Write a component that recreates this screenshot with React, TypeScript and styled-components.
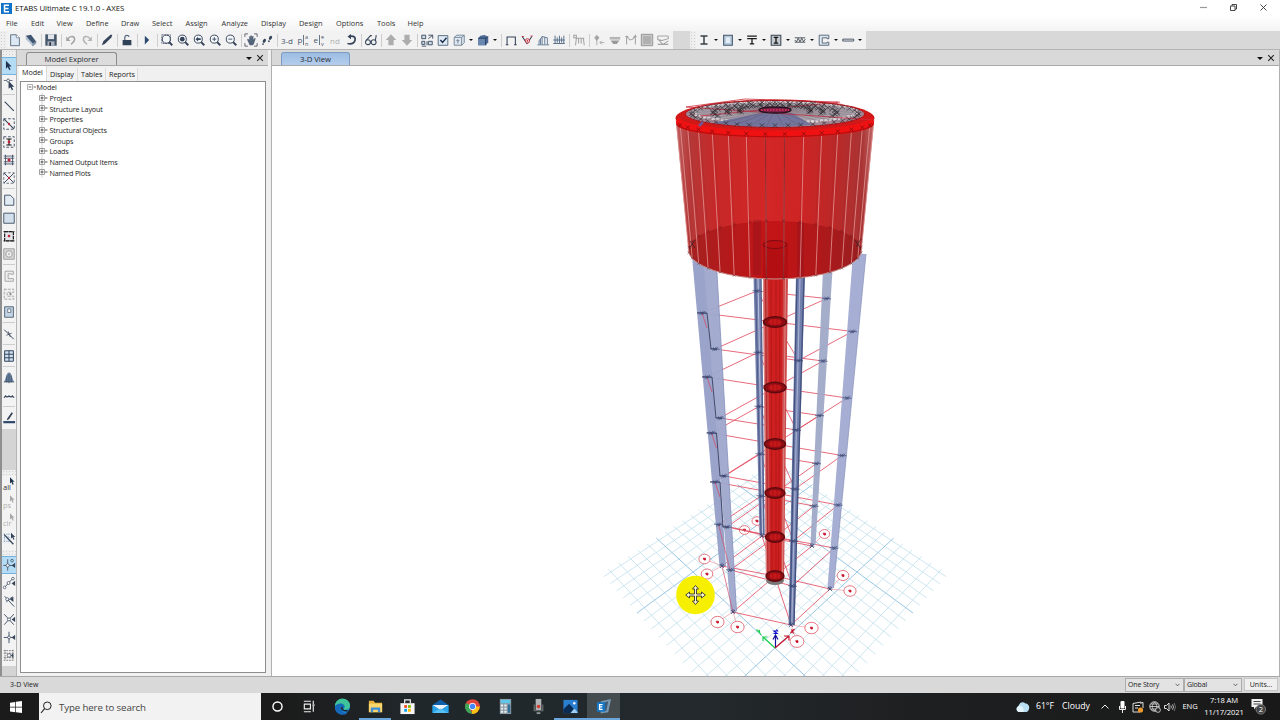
//-----------------------------------------------------------------------------//
// Import
//-----------------------------------------------------------------------------//

import * as React from 'react';
import styled, { createGlobalStyle } from 'styled-components';

//-----------------------------------------------------------------------------//
// Styles
//-----------------------------------------------------------------------------//

const GlobalStyle = createGlobalStyle`
  * { box-sizing: border-box; }
  body {
    margin:      0;
    overflow:    hidden;
    font-family: "Open Sans", "Noto Sans", sans-serif;
    font-size:   7.2px;
    color:       #222;
  }
  svg { display: block; flex: none; }
`;

const Window = styled.div`
  width:          1280px;
  height:         720px;
  display:        flex;
  flex-direction: column;
  background:     #fff;
`;

const TitleBar = styled.div`
  height:      15px;
  flex:        none;
  display:     flex;
  align-items: center;
  padding:     1px 11px 0 1px;
  font-size:   7.8px;
  color:       #111;
`;

const Title = styled.span`
  flex:        1;
  margin-left: 3px;
  letter-spacing: -0.08px;
`;

const WindowButtons = styled.div`
  display: flex;
  gap:     20px;
`;

const MenuBar = styled.div`
  height:      16px;
  flex:        none;
  display:     flex;
  align-items: center;
  padding-left: 6px;
  font-size:   7.4px;
  background:  linear-gradient(#fff, #f4f4f4);
`;

const MenuItem = styled.span<{ $w: number }>`
  width:       ${p => p.$w}px;
  white-space: nowrap;
  color:       #333;
`;

const ToolRow = styled.div`
  height:        19px;
  flex:          none;
  display:       flex;
  background:    #d8d8d8;
  border-bottom: 1px solid #b4b4b4;
`;

const Toolbar = styled.div<{ $gap?: number }>`
  display:      flex;
  align-items:  center;
  background:   #f2f2f2;
  margin-left:  ${p => p.$gap || 0}px;
  padding-right: 2px;
`;

const Grip = styled.div<{ $vertical?: boolean, $size: number }>`
  width:      ${p => p.$vertical ? '14px' : p.$size + 'px'};
  height:     ${p => p.$vertical ? p.$size + 'px' : '18px'};
  background: radial-gradient(#d0d0d0 0.7px, #eee 0.8px) 0 0 / 3px 3px;
  flex:       none;
`;

const ToolSlot = styled.div<{ $active?: boolean, $h?: number }>`
  width:           ${p => p.$h ? 14 : 16}px;
  height:          ${p => p.$h || 18}px;
  display:         flex;
  align-items:     center;
  justify-content: center;
  background:      ${p => p.$active ? '#b5dcf5' : 'transparent'};
  border:          solid ${p => p.$active ? '#74b3de' : 'transparent'};
  border-width:    1px 0;
  flex:            none;
`;

const ToolText = styled.span<{ $dim?: boolean }>`
  font-size:   8px;
  color:       ${p => p.$dim ? '#b0b0b0' : '#46546a'};
  white-space: nowrap;
`;

const Divider = styled.i`
  width:       1px;
  height:      13px;
  margin:      0 1px 0 2px;
  background:  #cdcdcd;
`;

const HDivider = styled.i`
  display:     block;
  width:       12px;
  height:      1px;
  margin:      1px 1px 2px;
  background:  #cdcdcd;
`;

const Caret = styled.i<{ $big?: boolean }>`
  width:        0;
  height:       0;
  margin:       0 2px;
  border:       solid transparent;
  border-width: ${p => p.$big ? '3px 3px 0' : '2.4px 2px 0'};
  border-top-color: #111;
`;

const Workspace = styled.div`
  height:  626px;
  display: flex;
  flex:    none;
  background: #efefef;
`;

const SideStrip = styled.div`
  width:       17px;
  border-left: 2px solid #8f8f8f;
  border-right: 1px solid #b5b5b5;
  background:  #d4d4d4;
`;

const SideGroup = styled.div<{ $gap?: number }>`
  width:         14px;
  margin-top:    ${p => p.$gap || 0}px;
  padding-bottom: 2px;
  background:    #f3f3f3;
`;

const Explorer = styled.div`
  width:          251px;
  display:        flex;
  flex-direction: column;
  background:     #f0f0f0;
`;

const DockHeader = styled.div<{ $pad: number }>`
  height:        16px;
  display:       flex;
  align-items:   flex-end;
  padding-left:  ${p => p.$pad}px;
  background:    #d9d9d9;
  border-bottom: 1px solid #a9a9a9;
`;

const DockTab = styled.div<{ $w: number, $blue?: boolean }>`
  width:         ${p => p.$w}px;
  height:        13px;
  line-height:   12px;
  text-align:    center;
  font-size:     7.8px;
  letter-spacing: -0.1px;
  color:         #2b2f36;
  border:        1px solid ${p => p.$blue ? '#7d9cc4' : '#8c8c8c'};
  border-bottom: 0;
  border-radius: 3px 3px 0 0;
  background:    ${p => p.$blue ? 'linear-gradient(#9dbde2, #b3cdec)' : '#dcdcdc'};
`;

const DockButtons = styled.div`
  display:      flex;
  align-items:  center;
  gap:          2px;
  height:       14px;
  margin-left:  auto;
  padding-right: 4px;
`;

const PageTabs = styled.div`
  height:      15px;
  display:     flex;
  align-items: flex-end;
  padding-left: 2px;
`;

const PageTab = styled.div<{ $w: number, $on?: boolean }>`
  width:        ${p => p.$w}px;
  height:       ${p => p.$on ? 15 : 13}px;
  line-height:  ${p => p.$on ? 13 : 12}px;
  padding-left: 3px;
  background:   ${p => p.$on ? '#fff' : '#f3f3f3'};
  border-right: 1px solid #dcdcdc;
  color:        #222;
  letter-spacing: -0.05px;
`;

const TreeBox = styled.div`
  flex:       1;
  margin:     0 2px 3px 3px;
  border:     1px solid #8e8e8e;
  background: #fff;
`;

const TreeRow = styled.div<{ $level: number }>`
  height:       10.67px;
  display:      flex;
  align-items:  center;
  padding-left: ${p => 6 + p.$level * 12}px;
  color:        #1c1c1c;
  letter-spacing: -0.16px;

  svg { margin-right: ${p => 0.5 + p.$level}px; }
`;

const ViewPane = styled.div`
  flex:           1;
  margin-left:    3px;
  border-left:    1px solid #b0b0b0;
  border-right:   1px solid #b0b0b0;
  display:        flex;
  flex-direction: column;
  background:     #fff;
`;

const StatusBar = styled.div`
  height:       17px;
  flex:         none;
  display:      flex;
  align-items:  center;
  padding:      0 2px 1px 10px;
  background:   #d9d9d9;
  border-top:   1px solid #a8a8a8;
  font-size:    7px;
`;

const StatusText = styled.span`
  flex: 1;
`;

const Combo = styled.div<{ $w: number }>`
  width:           ${p => p.$w}px;
  height:          14px;
  display:         flex;
  align-items:     center;
  justify-content: space-between;
  padding:         0 3px 0 2px;
  border:          1px solid #adadad;
  background:      #e3e3e3;
  letter-spacing:  -0.15px;
`;

const UnitsButton = styled.div`
  width:       34px;
  height:      13px;
  line-height: 11px;
  margin-left: 2px;
  text-align:  center;
  background:  #efefef;
  border:      1px solid #c6c6c6;
`;

const Taskbar = styled.div`
  height:      27px;
  flex:        none;
  display:     flex;
  align-items: stretch;
  background:  linear-gradient(90deg, #1b1b1b 0, #1b1b1b 22%, #20272a 32%, #23292c 55%, #1e1f20 72%, #191919);
  color:       #fff;
`;

const StartButton = styled.div`
  width:           39px;
  display:         flex;
  align-items:     center;
  justify-content: center;
  padding-right:   8px;
`;

const Search = styled.div`
  width:       222px;
  display:     flex;
  align-items: center;
  gap:         7px;
  padding:     1px 0 0 1px;
  background:  #f2f2f2;
  color:       #444;
  font-size:   9.7px;
  letter-spacing: -0.12px;
`;

const Apps = styled.div`
  display: flex;
`;

const Task = styled.div<{ $open?: boolean, $active?: boolean }>`
  width:           32.6px;
  display:         flex;
  align-items:     center;
  justify-content: center;
  background:      ${p => p.$active ? '#454c50' : 'transparent'};
  border-bottom:   2px solid ${p => p.$open ? '#6aa6dc' : 'transparent'};
  border-top:      2px solid ${p => p.$active ? '#454c50' : 'transparent'};
`;

const Tray = styled.div`
  display:     flex;
  align-items: center;
  margin-left: auto;
  padding-right: 8px;
`;

const TrayCell = styled.div<{ $w: number, $small?: boolean }>`
  width:           ${p => p.$w}px;
  display:         flex;
  justify-content: center;
  text-align:      center;
  white-space:     nowrap;
  line-height:     11.500px;
  font-size:       ${p => p.$small ? 7.6 : 8.7}px;
  letter-spacing:  ${p => p.$small ? -0.1 : 0}px;
`;

//-----------------------------------------------------------------------------//
// Icons (all drawn on a 16 x 16 box)
//-----------------------------------------------------------------------------//

const INK  = '#35445a';
const DIM  = '#a4a4a4';
const PALE = '#cfdcea';

const lens = (inner: React.ReactNode) => (
  <>
    <circle cx="7.2" cy="7" r="4.6" fill="#f4f7fa" stroke={INK} strokeWidth="1.1"/>
    <path d="M10.5 10.5L14 14" stroke={INK} strokeWidth="2.2"/>
    {inner}
  </>
);

const pointer = (x: number, y: number, fill: string) => (
  <path d={`M${x} ${y}v9l2-1.900 1.800 3.600 1.600-.8-1.800-3.400h2.900z`} fill={fill}/>
);

const arrowTip = <path d="M15 5.5v6l-4-3z" fill={INK}/>;

const ICONS: { [name: string]: React.ReactNode } = {
  'new':   <><path d="M3 2h6.500l3.500 3.500v9h-10z" fill="#dce9f4" stroke="#53657a"/><path d="M9.500 2v3.500h3.500" fill="#fff" stroke="#53657a" strokeWidth=".7"/></>,
  'book':  <><path d="M2 3l6-1 6 8-4 5z" fill="#3f5571"/><path d="M2 3v4l8 8v-3z" fill="#b8c5d4"/><path d="M10 12l4-3v3l-4 3z" fill="#8698ad"/></>,
  'save':  <><path d="M1.500 1.500h13v13h-13z" fill="#46566a"/><path d="M4.500 1.500h7v5.500h-7z" fill="#dfe5ea"/><path d="M4 9.500h8v5H4z" fill="#aab5c1"/><path d="M6 10.500h2v4H6z" fill="#334"/></>,
  'undo':  <><path d="M4 7c4-5 9-3 8 1-.4 2-2 3-4 5" fill="none" stroke={DIM} strokeWidth="1.8"/><path d="M2.5 4v5h5z" fill={DIM}/></>,
  'redo':  <><path d="M12 7c-4-5-9-3-8 1 .4 2 2 3 4 5" fill="none" stroke="#b4b4b4" strokeWidth="1.8"/><path d="M13.5 4v5h-5z" fill="#b4b4b4"/></>,
  'pen':   <path d="M2 14l2-5 8-7 2 0-1 3-7 7-2 1z" fill={INK}/>,
  'lock':  <><path d="M3 8h10v6H3z" fill="#2f4257"/><path d="M5.5 8V4.5a2.6 2.6 0 0 1 5 0" fill="none" stroke="#55677c" strokeWidth="1.4"/></>,
  'play':  <path d="M5.500 3l5 5-5 5z" fill="#2d4a6f"/>,
  'zrect': lens(<path d="M2 2h10v10H2z" fill="none" stroke={INK} strokeWidth=".8" strokeDasharray="2 1"/>),
  'zfull': lens(<circle cx="7.2" cy="7" r="2.7" fill={INK}/>),
  'zprev': lens(<path d="M10 6v2H7v1.6L4 7l3-2.6V6z" fill={INK}/>),
  'zin':   lens(<path d="M5 7h4.400M7.200 4.800v4.400" stroke={INK}/>),
  'zout':  lens(<path d="M5 7h4.400" stroke={INK}/>),
  'hand':  <><path d="M3.500 7.500l1.300-.8L6 8V3.800h1.500v3V2.800H9v4l.3-3.300h1.500V8l1-2.200 1.500.5-1.800 5.700-1.200 2H6.500z" fill="#54657a"/><path d="M1 4.500V1h3.500M11.500 1H15v3.500M15 11.500V15h-3.500M4.500 15H1v-3.500" fill="none" stroke="#445" strokeWidth=".9"/></>,
  'steps': <><ellipse cx="5" cy="9" rx="1.600" ry="2.500" fill={INK} transform="rotate(30 5 9)"/><ellipse cx="3.400" cy="12.700" rx="1" ry="1.100" fill={INK}/><ellipse cx="12" cy="5.500" rx="1.600" ry="2.500" fill={INK} transform="rotate(30 12 5.5)"/><ellipse cx="10.200" cy="9.500" rx="1" ry="1.100" fill={INK}/></>,
  'rot':   <><path d="M7 3.500c5-.5 6.500 2 5.500 5s-4 4.500-8.500 3.500" fill="none" stroke={INK} strokeWidth="2"/><path d="M8 1v6L4 4z" fill={INK}/></>,
  'specs': <g fill="none" stroke={INK} strokeWidth="1.200"><circle cx="4.500" cy="10.500" r="2.800"/><circle cx="11" cy="10.500" r="2.800"/><path d="M2.500 8.500l5-5.500 1.500 0M13 8.500l1-6M7 10h1.500"/></g>,
  'up':    <path d="M8 1.500l6 6.500H11v6H5V8H2z" fill="#adadad"/>,
  'down':  <path d="M8 14.500l6-6.500H11V2H5v6H2z" fill="#adadad"/>,
  'objs':  <><path d="M2 2.500h4.500v4H2zM9.500 9.500h4.500v4H9.500zM2 9.500h3.500v3.500H2z" fill={PALE} stroke={INK}/><path d="M9.500 2.500h5v4M9.500 6.500l5-4M8 14v-4.500M2 15h5" fill="none" stroke={INK} strokeWidth="1"/></>,
  'check': <><path d="M2.500 3h11v11h-11z" fill="#dfeaf5" stroke="#4c6078"/><path d="M5 8l2.500 2.700L12 5.500" fill="none" stroke="#1f3250" strokeWidth="1.700"/></>,
  'cube':  <><path d="M2.500 5l3-2.500h8.500V11l-3 3h-8.500z" fill="#dfe7ef" stroke="#6c7f94"/><path d="M2.500 5h8.500v9M11 5l3-2.500M6.700 7v5M5 8.700h3.400" fill="none" stroke="#6c7f94"/></>,
  'solid': <><path d="M2.500 6l2.500-3 5-.8 4 2.300v6L11 14h-8.500z" fill="#4c6a94"/><path d="M2.500 6h8v8h-8z" fill="#6a87b0"/><path d="M2.500 6h8.500v8M11 6l3-2" fill="none" stroke="#23395a"/></>,
  'frame': <path d="M3.500 13.500V4.500h9.500v9M2 13.500h3M11.500 13.500h3" fill="none" stroke={INK} strokeWidth="1.200"/>,
  'disp':  <><path d="M2.500 4l5.500 8 5.500-8" fill="none" stroke={INK} strokeWidth="1.200"/><circle cx="8.500" cy="9" r="2.500" fill="#f3dede" stroke="#c2283a"/><circle cx="8.500" cy="9" r=".9" fill="#c2283a"/><path d="M2 4h2.500M12 3.500h2.500" stroke="#c2283a"/></>,
  'shear': <path d="M1.500 13.500h13.500M3.500 13V9l3.500-5v9M7 4l6 1.500V13M10 4.800V13M5.200 7v6" fill="none" stroke="#55708f"/>,
  'loads': <path d="M1.500 8h13M3.500 3v9M6 5v6M8.500 3v9M11 5v6M13.500 3v9M1.500 12h13" fill="none" stroke="#496380" strokeWidth="1"/>,
  'table': <path d="M4 14l1-8h8l1 8M7.500 6v6M10.500 6v6M2 2.500h3v3H2zM4 6h10" fill="none" stroke={DIM} strokeWidth="1.200"/>,
  'tree':  <><path d="M5.500 2l3 3.500-3 3.500-3-3.500z" fill={DIM}/><path d="M5.500 8v6M9 11h5M11 9l-2 2 2 2" fill="none" stroke={DIM}/></>,
  'slab':  <><path d="M2 4.500h12v3H2z" fill="#b5b5b5"/><path d="M3 8.500h10l-3 4H6z" fill="#999"/></>,
  'mom':   <path d="M3 13V4l4 4 3-1 3-4v10M1.500 4h3.500M11 4h3.500" fill="none" stroke={DIM} strokeWidth="1.200"/>,
  'shell': <><path d="M1.500 1.500h13v13h-13z" fill="#c9c9c9" stroke="#8e8e8e"/><path d="M3.500 3.500h9v9h-9z" fill="#b0b0b0"/></>,
  'arch':  <path d="M2 3.500h12M2 3.500v4l5 1 7-2v-3M3 8l5 5 6-4M2 13h12" fill="none" stroke={DIM} strokeWidth="1.200"/>,
  'ibeam': <path d="M4 3.500h8M4 12.500h8M8 3.500v9" stroke="#3a4048" strokeWidth="1.700"/>,
  'box':   <><path d="M3 2.500h10v11.500H3z" fill="#b4c8da" stroke="#46586c" strokeWidth="1.200"/><path d="M5.500 5h5v6.500h-5z" fill="#e5eef6"/></>,
  'tee':   <path d="M2.500 3.500h11M2.500 6.500h11M8 6v6.500M5.500 12.500h5" stroke="#1c1c1c" strokeWidth="1.500"/>,
  'iboxed':<><path d="M2.500 2.500h11v11.500h-11z" fill="#c3cad1" stroke="#3b444e" strokeWidth="1.200"/><path d="M5.500 5h5M5.500 11.500h5M8 5v6.500" stroke="#111" strokeWidth="1.500"/></>,
  'truss': <path d="M2 5.500h12M2 10.500h12M2 8l2 2 2-4 2 4 2-4 2 4 2-3" fill="none" stroke="#3c444c" strokeWidth="1"/>,
  'chan':  <><path d="M2.500 2.500h11v4h-2V5.500H6v6h5.500v-1h2v3.500h-11z" fill="#dde7f0" stroke="#4d5d6f" strokeWidth="1"/></>,
  'link':  <path d="M2 7h12.500v2.200H2z" fill="#e8edf2" stroke="#3c4a59"/>,

  'ptr':   pointer(4.500, 2, '#1f3350'),
  'node':  <>{pointer(7.500, 4.500, '#33425a')}<path d="M2 4h10M7 2v4" stroke={INK} strokeWidth=".8"/><circle cx="7" cy="4" r="1.600" fill="#fff" stroke={INK} strokeWidth=".8"/></>,
  'line':  <path d="M3 3l10.500 10.500" stroke={INK} strokeWidth="1.200"/>,
  'dline': <><path d="M2 2h12v12H2z" fill="none" stroke={INK} strokeDasharray="3 2"/><path d="M2.500 2.500l11 11" stroke={INK} strokeWidth="1.200"/><circle cx="8" cy="8" r="1.300" fill="#c4203a"/></>,
  'dcol':  <><path d="M2 2h12v12H2z" fill="none" stroke={INK} strokeDasharray="3 2"/><path d="M5 4.500h6M5 11.500h6M8 4.500v7" stroke="#111" strokeWidth="1.200"/><circle cx="8" cy="8" r="1.600" fill="#c4203a"/></>,
  'dbeam': <><path d="M2 3.500h12M2 12.500h12M2 6h12M2 10h12M4 2v12M12 2v12" stroke={INK} strokeWidth=".9"/><circle cx="8" cy="8" r="1.800" fill="#c4203a"/></>,
  'dbrace':<><path d="M2 2h12v12H2z" fill="none" stroke={INK} strokeWidth=".8" strokeDasharray="3 2"/><path d="M2.500 2.500l11 11M13.500 2.500l-11 11" stroke={INK} strokeWidth="1.100"/><circle cx="8" cy="8" r="1.300" fill="#c4203a"/></>,
  'poly':  <path d="M3 2.500h6.500L13.500 6.500v7.500H3z" fill="#e2ebf3" stroke="#47586c" strokeWidth="1.100"/>,
  'rect':  <path d="M2 2.500h12v11.500H2z" fill="#d3e0ec" stroke="#47586c" strokeWidth="1.100"/>,
  'rectp': <><path d="M3 3h10v10.500H3z" fill="#e3e6ea" stroke="#222" strokeWidth="1.400" strokeDasharray="4 1"/><path d="M1.500 3h13M1.500 13.500h13" stroke="#222" strokeWidth=".8"/><circle cx="8" cy="8" r="1.500" fill="#c4203a"/></>,
  'circ':  <><path d="M2 2h12v12H2z" fill="#d6d6d6" stroke="#999"/><circle cx="8" cy="8" r="3.700" fill="#eee" stroke="#999"/><circle cx="8" cy="8" r=".9" fill="#888"/></>,
  'wall':  <path d="M3.500 2.500h9.500v3.500h-2.500V5.500H7v5.500h6v3H3.500z" fill="#eee" stroke={DIM} strokeWidth="1.100"/>,
  'wallp': <><path d="M2.500 2.500h11v3.500H6v4.500h7.500v3.500h-11z" fill="#eee" stroke={DIM} strokeWidth="1.100" strokeDasharray="3 1.500"/><path d="M8 8h3.500M9.700 6.500v3" stroke="#888"/></>,
  'open':  <><path d="M3 2h10v12H3z" fill="#c3d4e4" stroke="#47586c"/><path d="M6.500 4.500h3.500v4H6.500z" fill="#fff" stroke="#47586c" strokeWidth=".8"/></>,
  'linkd': <><path d="M2.500 3l11 11" stroke={INK} strokeWidth="1.100"/><path d="M5 9.500l6-2.500M7 5l2.500 6.500" stroke={INK} strokeWidth=".9"/></>,
  'grid':  <path d="M3 2h10v12H3zM3 6h10M3 10h10M8 2v12" fill="#cfe0ef" stroke="#2f4257" strokeWidth="1.100"/>,
  'tower': <><path d="M6 2.500h4l3.500 10h-11z" fill="#6d87a5"/><path d="M8 1.500V14M5.500 5v8M10.500 5v8M2 12.500h12" stroke="#2f4257" strokeWidth=".8"/></>,
  'wave':  <path d="M2 9.500q1.500 0 2-1.500 2 2 4 0 2 2 4 0 .5 1.500 2 1.500" fill="none" stroke={INK} strokeWidth="1.300"/>,
  'sect':  <><path d="M6 8.500l5-7 1.500 1L8 9.500l-2.500 1z" fill={INK}/><path d="M1.500 11.500h13.500v2.500H1.500z" fill="#2d476a"/></>,
  'dash':  <><path d="M2 2.500h9M2 6.500h9M2 10.500h9M3 2v11M7 2v11" stroke="#86a8c8" strokeDasharray="1.500 1.200"/><path d="M2.500 3L13 14" stroke={INK} strokeWidth="1.500"/><g transform="translate(6.500 0) scale(.75)">{pointer(5, 1, '#33425a')}</g></>,
  's1':    <><path d="M6.500 1.500v13M1.500 8.500h12" stroke={INK} strokeWidth=".9"/><circle cx="6.500" cy="8.500" r="1.800" fill="#fff" stroke={INK} strokeWidth=".8"/><circle cx="11.500" cy="3" r="1.500" fill="none" stroke={INK} strokeWidth=".8"/>{arrowTip}</>,
  's2':    <><path d="M3 13L12 3" stroke={INK} strokeWidth=".9"/><circle cx="3" cy="13" r="1.500" fill="#fff" stroke={INK} strokeWidth=".8"/><circle cx="7.500" cy="8" r="1.700" fill="#fff" stroke={INK} strokeWidth=".8"/><circle cx="12.500" cy="3" r="1.500" fill="#fff" stroke={INK} strokeWidth=".8"/>{arrowTip}</>,
  's3':    <><path d="M3 2.500l11 12M5 9l7-6" stroke={INK} strokeWidth="1"/><circle cx="6" cy="6" r="1.700" fill="#fff" stroke={INK} strokeWidth=".8"/><path d="M13 3v6L9 6z" fill={INK}/></>,
  's4':    <><path d="M2.500 2.500l11 12M13.500 2.500l-11 12" stroke={INK} strokeWidth="1"/><circle cx="8" cy="8.500" r="1.700" fill="#fff" stroke={INK} strokeWidth=".8"/>{arrowTip}</>,
  's5':    <><path d="M8 2v13M2 8.500h10" stroke={INK} strokeWidth="1"/><circle cx="8" cy="8.500" r="1.600" fill="#fff" stroke={INK} strokeWidth=".8"/>{arrowTip}</>,
  's6':    <><path d="M2 3h12M2 6h12M2 11h12M2 14h12M3.500 2v12M12.500 2v12" stroke="#777" strokeDasharray="2 1"/><circle cx="8" cy="8.500" r="2" fill="#fff" stroke={INK} strokeWidth=".8"/><path d="M13 6v5l-3-2.500z" fill={INK}/></>,
};

type IconProps = { name: string, size?: number }

const Icon = ({ name, size = 14 }: IconProps) => (
  <svg width={size} height={size} viewBox="0 0 16 16">{ICONS[name]}</svg>
);

const Cross = ({ size }: { size: number }) => (
  <svg width={size} height={size} viewBox="0 0 8 8"><path d="M1.200 1.200l5.600 5.600M6.800 1.200L1.200 6.800" stroke="#222" strokeWidth="1.100"/></svg>
);

const Chevron = () => (
  <svg width="5" height="4" viewBox="0 0 5 4"><path d="M.5 .8l2 2 2-2" fill="none" stroke="#444" strokeWidth=".8"/></svg>
);

//-----------------------------------------------------------------------------//
// Data. '|' is a separator, 'v' a drop down arrow, '#' and '~' stand for text
//-----------------------------------------------------------------------------//

const MENU: [string, number][] = [
  ['File', 25], ['Edit', 25.500], ['View', 29.500], ['Define', 35], ['Draw', 31], ['Select', 33.5],
  ['Assign', 36], ['Analyze', 39.500], ['Display', 38], ['Design', 37], ['Options', 41],
  ['Tools', 30.500], ['Help', 30],
];

const TOOLS_MAIN = ('new book | save | undo redo | pen | lock | play | zrect zfull zprev zin zout | '
  + 'hand steps | #3-d #pla #ele ~nd rot | specs | up down | objs check cube v solid v | '
  + 'frame disp shear loads | table | tree slab mom shell arch').split(' ');

const TOOLS_SECTION = 'ibeam v box v tee v iboxed v truss v chan v link v'.split(' ');

const SIDE_DRAW   = ('*ptr node | line dline dcol dbeam dbrace | poly rect rectp circ | wall wallp open | '
  + 'linkd | grid | tower wave | sect').split(' ');
const SIDE_SELECT = '#all ~ps ~clr dash'.split(' ');
const SIDE_SNAP   = '*s1 s2 s3 s4 s5 s6'.split(' ');

const TREE = ['Project', 'Structure Layout', 'Properties', 'Structural Objects', 'Groups', 'Loads',
  'Named Output Items', 'Named Plots'];

//-----------------------------------------------------------------------------//
// Tool bars
//-----------------------------------------------------------------------------//

const SplitText = ({ head, top, bottom }: { head: string, top: string, bottom: string }) => (
  <svg width="15" height="16" viewBox="0 0 15 16" fill="#46546a">
    <text x="1.500" y="10.500" fontSize="8">{head}</text>
    <path d="M7.500 3v10" stroke="#46546a" strokeWidth=".8"/>
    <text x="9" y="6.500" fontSize="5.500">{top}</text>
    <text x="9" y="14" fontSize="5.500">{bottom}</text>
  </svg>
);

const renderTool = (t: string, i: number) => {
  if (t === '|') return <Divider key={i}/>;
  if (t === 'v') return <Caret key={i}/>;
  if (t === '#pla') return <ToolSlot key={i}><SplitText head="p" top="a" bottom="n"/></ToolSlot>;
  if (t === '#ele') return <ToolSlot key={i}><SplitText head="e" top="e" bottom="v"/></ToolSlot>;
  if (t[0] === '#' || t[0] === '~')
    return <ToolSlot key={i}><ToolText $dim={t[0] === '~'}>{t.slice(1)}</ToolText></ToolSlot>;
  return <ToolSlot key={i}><Icon name={t}/></ToolSlot>;
};

const renderSideTool = (t: string, i: number) => {
  if (t === '|') return <HDivider key={i}/>;
  if (t[0] === '#' || t[0] === '~') {
    const dim = t[0] === '~';
    return (
      <ToolSlot key={i} $h={18}>
        <svg width="14" height="16" viewBox="0 0 14 16">
          <text x="1" y="13" fontSize="7.500" fill={dim ? '#b0b0b0' : '#333'}>{t.slice(1)}</text>
          <g transform="translate(4.500 -.5) scale(.7)">{pointer(5, 1, dim ? '#a8a8a8' : '#1f3350')}</g>
        </svg>
      </ToolSlot>
    );
  }
  const active = t[0] === '*';
  return (
    <ToolSlot key={i} $h={18} $active={active}><Icon name={active ? t.slice(1) : t}/></ToolSlot>
  );
};

//-----------------------------------------------------------------------------//
// 3-D model
//-----------------------------------------------------------------------------//

type Pt = [number, number];

const CX = 775;

// floor plan (u, v) to screen
const floor = (u: number, v: number): Pt => {
  const d = 1 + 0.01335 * (u + v);
  return [CX + 9.295 * (u - v) / d, 648 - 8.615 * (u + v) / d];
};

const seg = (a: Pt, b: Pt) => `M${a[0].toFixed(1)} ${a[1].toFixed(1)}L${b[0].toFixed(1)} ${b[1].toFixed(1)}`;

const FloorGrid = () => {
  const minor: string[] = [];
  const major: string[] = [];
  for (let i = -5; i <= 15; i++) {
    const list = i % 10 === 0 ? major : minor;
    list.push(seg(floor(i, -5.700), floor(i, 15.400)));
    list.push(seg(floor(-5.700, i), floor(15.400, i)));
  }
  return (
    <g fill="none">
      <path d={minor.join('')} stroke="#c0dfec" strokeWidth=".8"/>
      <path d={major.join('')} stroke="#98c6e4" strokeWidth="1"/>
    </g>
  );
};

// node positions down each column, the last one is the support
const COL: { [id: string]: Pt[] } = {
  A: [[702, 313], [707, 377], [711.500, 433], [715, 482], [718.500, 524.500], [722, 566]],
  B: [[715, 349], [720, 418], [724, 476], [727, 527], [730.500, 570], [733, 612]],
  C: [[757, 291], [758, 352.500], [759, 406.500], [760, 454], [761, 496], [762, 536]],
  D: [[798.500, 360.500], [796.500, 430], [795, 489], [793.500, 541], [792.500, 586], [791, 625]],
  E: [[826.500, 298.500], [823, 361], [819.500, 415.500], [816.500, 463.500], [814, 506], [812, 546]],
  F: [[852.500, 331.500], [847, 398], [842, 455.500], [838, 505], [834, 548], [830, 589]],
};

const RING_Y = [322, 387.500, 444, 493, 537, 576];

const Beams = () => {
  const lines: string[] = [];
  RING_Y.forEach((y, i) => {
    const c: Pt = [CX, y];
    'ABCDEF'.split('').forEach(id => lines.push(seg(COL[id][i], c)));
    ['AC', 'CE', 'BD', 'DF'].forEach(e => lines.push(seg(COL[e[0]][i], COL[e[1]][i])));
  });
  return <path d={lines.join('')} stroke="#e2455a" strokeWidth=".8" fill="none"/>;
};

const Supports = () => (
  <g stroke="#36426e" strokeWidth=".8" fill="none" opacity=".9">
    {Object.keys(COL).map(id => COL[id].map(([x, y], i) => (
      <path key={id + i} d={i === 5
        ? `M${x - 2} ${y - 2}l4 4m0 -4l-4 4M${x - 2.500} ${y}h5M${x} ${y - 3}v4`
        : `M${x - 4.500} ${y - .3}l9 .6M${x - 2.500} ${y + 1.800}l4 -3.600M${x - .5} ${y + 1.800}l3.500 -3.600M${x - 2} ${y - 1.500}l3.500 3`}/>
    )))}
  </g>
);

const BUBBLES: Pt[] = [[757, 521], [744.500, 530], [704.500, 559], [707, 574], [717.500, 622], [737.500, 627],
  [811.500, 628], [797, 641.500], [850, 591], [843, 575.500], [824.500, 534]];

const LEADERS = 'M757 521L762 536M744.500 530L762 536M704.500 559L722 566M707 574L722 566'
  + 'M717.500 622L733 612L737.500 627M811.500 628L791 625L797 641M850 591L830 589L843 575M824 534L812 546';

const Bubbles = () => (
  <g>
    <path d={LEADERS} stroke="#ee9aa3" strokeWidth=".7" fill="none"/>
    {BUBBLES.map(([x, y], i) => {
      const r = 5 + (y - 520) / 65;
      return (
        <g key={i}>
          <ellipse cx={x} cy={y} rx={r} ry={r * .86} fill="#fff" stroke="#e46a76" strokeWidth=".9"/>
          <path d={`M${x - 1.300} ${y - .8}h2.300v1.800h-1.500z`} fill="#c8102a" stroke="#c8102a" strokeWidth=".8"/>
        </g>
      );
    })}
  </g>
);

const Columns = () => (
  <g>
    <path d="M753.500 276H761.500L764.500 535H759.500z" fill="#6d7aa8"/>
    <path d="M755.500 276L761 535M761 276L764 535" stroke="#3c4a7c" strokeWidth=".8" fill="none"/>
    <path d="M758 276L762.600 535" stroke="#b9c2de" strokeWidth="1"/>
    <path d="M823 270H832.500L815.500 545H810.500z" fill="#a0a9c8"/>
    <path d="M692 256H706L726 566H719.500z" fill="#959fc8"/>
    <path d="M703 256H716L736.500 611H730.500z" fill="#9fa8cc"/>
    <path d="M716 256L736.500 611" stroke="#7f8abb" strokeWidth=".8"/>
    <path d="M853 254H866L833.500 588H827.500z" fill="#a2abd1"/>
    <path d="M866 254L833.500 588" stroke="#808bb8" strokeWidth=".7"/>
    {COL.A.slice(0, 4).map(([x, y], i) => {
      const [bx, by] = COL.B[i];
      return (
        <g key={i} fill="none">
          <path d={`M${x - 5} ${y}H${x + 5}L${bx - 4} ${by}H${bx + 2}`} stroke="#3b4262" strokeWidth="1"/>
          <path d={`M${x} ${y}L${x + 5} ${y + 15}`} stroke="#cf4560" strokeWidth=".8"/>
        </g>
      );
    })}
    <path d="M718.500 524L730 570M722 566L733 612" stroke="#cf4560" strokeWidth=".7"/>
  </g>
);

const Shaft = () => (
  <g>
    <ellipse cx={CX} cy="580.500" rx="9" ry="4.500" fill="#777"/>
    <path d="M763 276H788L784 579Q775 585 766 579z" fill="#cd4a4a"/>
    <path d="M768 276H783L781 580H770z" fill="#cf2020"/>
    <path d="M765.500 276L768 580M771 276L772 580M776 276V580M780 276L778.500 580" stroke="#a31318" strokeWidth=".6"/>
    <path d="M785.500 276L782.500 580M763.500 276L766.500 580" stroke="#df8a8a" strokeWidth="1"/>
    {RING_Y.map((y, i) => {
      const r = 11.500 - i * .5;
      return (
        <g key={y}>
          <ellipse cx={CX} cy={y} rx={r} ry={5.200} fill="#8d0d12" stroke="#5e0a10" strokeWidth="1.400"/>
          <ellipse cx={CX} cy={y} rx={r * .62} ry={3} fill="#b81418"/>
          <path d={`M${CX - 4} ${y - 3}v6M${CX} ${y - 3}v6M${CX + 4} ${y - 3}v6`} stroke="#d82020" strokeWidth=".7"/>
        </g>
      );
    })}
  </g>
);

const FrontColumn = () => (
  <g>
    <path d="M796 276H805L794.500 625H788.500z" fill="#7380ad"/>
    <path d="M797 276L790 625M804 276L794 625" stroke="#44527f" strokeWidth="1.300" fill="none"/>
    <path d="M800 276L791.800 625" stroke="#a4aed1" strokeWidth="1.200"/>
  </g>
);

const PANELS = 32;

const Tank = () => {
  const angle = (i: number) => (i + .5) * 2 * Math.PI / PANELS;
  const top    = (a: number): Pt => [CX + 99 * Math.cos(a), 122 + 13 * Math.sin(a)];
  const bottom = (a: number): Pt => [CX + 86.500 * Math.cos(a), 250 + 29 * Math.sin(a)];
  const all = Array.from({ length: PANELS }, (_, i) => angle(i));
  const front = all.filter(a => a < Math.PI);
  const back  = all.filter(a => a > Math.PI);

  // crossed mesh on the roof
  const mesh: string[] = [];
  [[.97, 2.500], [.72, 3], [.56, 2.600], [.42, 2.200]].forEach(([f, s], ring) => {
    for (let i = 0; i < 40; i++) {
      const a = (i + ring * .5) * Math.PI / 20;
      if (ring > 0 && Math.sin(a) > .4) continue;
      const x = CX + 86 * f * Math.cos(a);
      const y = 114 + 12 * f * Math.sin(a) - (1 - f) * 6;
      mesh.push(`M${(x - s).toFixed(1)} ${(y - s * .8).toFixed(1)}l${2 * s} ${1.600 * s}m0 ${-1.600 * s}l${-2 * s} ${1.600 * s}`);
    }
  });

  return (
    <g>
      <defs>
        <linearGradient id="shell" x1="0" x2="1">
          <stop offset="0" stopColor="#c06060"/>
          <stop offset=".07" stopColor="#b53838"/>
          <stop offset=".2" stopColor="#c62828"/>
          <stop offset=".45" stopColor="#d32626"/>
          <stop offset=".62" stopColor="#ce2424"/>
          <stop offset=".8" stopColor="#bb2828"/>
          <stop offset=".94" stopColor="#aa3434"/>
          <stop offset="1" stopColor="#c26a6a"/>
        </linearGradient>
        <linearGradient id="tankfloor" x1="0" x2="1">
          <stop offset="0" stopColor="#a01c1c"/>
          <stop offset=".5" stopColor="#c01012"/>
          <stop offset="1" stopColor="#941a1c"/>
        </linearGradient>
      </defs>
      <path d="M676 122L688.500 250A86.500 29 0 0 0 861.500 250L874 122A99 14 0 0 0 676 122z" fill="url(#shell)"/>
      <ellipse cx={CX} cy="250" rx="86.500" ry="29" fill="url(#tankfloor)" opacity=".8"/>
      <path d="M753 220h8v55h-8zM797 222h7v54h-7z" fill="#7d1020" opacity=".3"/>
      <path d="M763 245H788V279H763z" fill="#a80c10" opacity=".6"/>
      <ellipse cx={CX} cy="244.500" rx="12" ry="4" fill="#b80f12" stroke="#7c0b10" strokeWidth="1"/>
      <path d={back.map(a => seg(top(a), bottom(a))).join('')} stroke="#8e1a1e" strokeWidth=".5" opacity=".3"/>
      <path d={front.map(a => seg(top(a), bottom(a))).join('')} stroke="#e59a98" strokeWidth=".9" opacity=".85"/>
      <path d={[7, 8].map(i => seg(top(angle(i)), bottom(angle(i)))).join('')} stroke="#7a1216" strokeWidth=".8"/>
      <path d="M688.500 250A86.500 29 0 0 0 861.500 250" fill="none" stroke="#c98f8f" strokeWidth="1"/>
      <path d={all.map(a => {
        const [x, y] = bottom(a);
        return `M${x - 1.500} ${y - 1.500}l3 2.500m0 -2.500l-3 2.500`;
      }).join('')} stroke="#5c1015" strokeWidth=".6" fill="none" opacity=".6"/>
      <path d="M690 241l5 7m0 -8l-6 9M861 239l-5 8m-1 -7l6 9" stroke="#3a2226" strokeWidth=".7"/>

      <ellipse cx={CX} cy="118" rx="99.500" ry="18.500" fill="#d01818"/>
      <path d="M675.500 119A99.500 17.500 0 0 0 874.500 119L873.500 124.500A98.500 13 0 0 1 676.500 124.500z" fill="#ee1010"/>
      <path d="M676 121A99 15.500 0 0 0 874 121L871 117A96 13.500 0 0 1 679 117z" fill="#f01212"/>
      <path d="M676.500 123.500A98.500 13.200 0 0 0 873.500 123.500" fill="none" stroke="#a80d10" strokeWidth=".9"/>
      <ellipse cx={CX} cy="114" rx="89.500" ry="13.500" fill="#a58a97"/>
      <ellipse cx={CX} cy="112" rx="82" ry="10.500" fill="#a9a1aa" stroke="#ddd6d8" strokeWidth="2.500" strokeDasharray="3 1.500"/>
      <path d="M712 123L760 113L792 113L812 125Q760 130 712 123z" fill="#74759c"/>
      <path d="M686 107L745 99L838 102M686 107L874 120M840 102L700 116" fill="none" stroke="#d22b3c" strokeWidth=".8"/>
      <ellipse cx={CX} cy="114" rx="89.500" ry="13.500" fill="none" stroke="#b01218" strokeWidth="1"/>
      <path d={all.map(a => seg([CX + 88 * Math.cos(a), 114 + 13 * Math.sin(a)], [CX + 16 * Math.cos(a), 110 + 3 * Math.sin(a)])).join('')}
        stroke="#50394a" strokeWidth=".4" opacity=".6"/>
      <path d={mesh.join('')} stroke="#252025" strokeWidth=".65" fill="none" opacity=".85"/>
      <ellipse cx={CX} cy="110" rx="16" ry="3" fill="#7d1e4a" stroke="#26131f" strokeWidth="1.300"/>
      <path d="M761 110h28" stroke="#c83050" strokeWidth="2" strokeDasharray="1.500 1.500"/>
      <path d={front.slice(1, -1).map(a => {
        const [x, y] = top(a);
        return `M${x - 2} ${y - 2.500}l4 3.500m0 -3.500l-4 3.500`;
      }).join('')} stroke="#5a0a0e" strokeWidth=".7" fill="none" opacity=".75"/>
      <path d="M699 126l4 -4" stroke="#6a5a98" strokeWidth="2.500"/>
    </g>
  );
};

const Axes = () => (
  <g fill="none" strokeWidth="1.200">
    <path d="M775.500 648V635M773 639.500l2.500 -4.500 2.500 4.500" stroke="#10109c"/>
    <path d="M773.500 633.500h3.500l-3 -2.500h3.500l-1 -1.500" stroke="#1010c8"/>
    <path d="M775 648L763 637M763 641v-4h4.500" stroke="#1fd050"/>
    <path d="M756.500 629.500l3 3 0 -2.500m0 2.500l1.500 2.500" stroke="#22d24c"/>
    <path d="M775 648L789 636M784 636h5v4.500" stroke="#c8102a"/>
    <path d="M790.500 633l4 -4m-3 .5l2 4" stroke="#c8102a"/>
  </g>
);

const PanCursor = () => (
  <g>
    <circle cx="695.500" cy="595" r="19.300" fill="#f6f000"/>
    <path d="M695.500 585.500l3 3.500h-2v5h5v-2l3.800 3-3.800 3v-2h-5v5h2l-3 3.500-3-3.500h2v-5h-5v2l-3.800-3 3.800-3v2h5v-5h-2z"
      fill="#fffbd0" stroke="#333" strokeWidth=".9"/>
  </g>
);

const Model = () => (
  <svg width="1007" height="610" viewBox="272 66 1007 610">
    <FloorGrid/>
    <Bubbles/>
    <Beams/>
    <g opacity=".95"><Columns/></g>
    <Shaft/>
    <FrontColumn/>
    <Supports/>
    <Tank/>
    <Axes/>
    <PanCursor/>
  </svg>
);

//-----------------------------------------------------------------------------//
// Task bar icons
//-----------------------------------------------------------------------------//

const TASKS: { art: React.ReactNode, open?: boolean, active?: boolean }[] = [
  { art: <circle cx="9" cy="9" r="4.800" fill="none" stroke="#fff" strokeWidth="1.500"/> },
  { art: <path d="M3 3.500h7.500M3 14.500h7.500M3.500 6.500h6.500v5H3.500zM13 3v3.500M13 8.500v6M12 7.500h2.500" fill="none" stroke="#eee" strokeWidth="1.200"/> },
  { art: <>
    <circle cx="9" cy="9" r="8" fill="#1b86d6"/>
    <path d="M1 9a8 8 0 0 1 16-1c0 3-2 4.500-5 4.500-2 0-2.300-1-1.500-2 1-2-1-4-4-3.500C4 7.300 2 8 1 9z" fill="#3fc39a"/>
    <path d="M1 9c1-3 8-5 10-1 .5 1 0 2-.5 3-1.500-.500-3 .5-2 2.500s4 3 6 2A8 8 0 0 1 1 9z" fill="#1669b8"/>
    <path d="M8.500 9.500c-.8 2 .8 4.500 6 4" fill="none" stroke="#1d2427" strokeWidth="1.600"/></> },
  { open: true, art: <><path d="M2 3h5l1.500 2H16v10H2z" fill="#e9b33c"/><path d="M2 6h14v9H2z" fill="#fbd76b"/><path d="M4 10h10v5h-2.500v-2.500h-5V15H4z" fill="#3f8ed6"/></> },
  { art: <><path d="M1.500 5.500h15V17h-15z" fill="#f5f5f5"/><path d="M6 5.500V2h6v3.500" fill="none" stroke="#eee" strokeWidth="1.300"/><path d="M5.500 7.500h3v3h-3z" fill="#f05022"/><path d="M9.500 7.500h3v3h-3z" fill="#7fba00"/><path d="M5.500 11.500h3v3h-3z" fill="#00a4ef"/><path d="M9.500 11.500h3v3h-3z" fill="#ffb900"/></> },
  { art: <><path d="M.5 7.500l8.500-6 8.500 6V16H.5z" fill="#0f5fa8"/><path d="M.5 7.500h17L9 13z" fill="#eaf4fb"/><path d="M.5 7.500l8.500 5.500 8.500-5.500V16H.5z" fill="#2aa5ea"/><path d="M.5 16L9 11l8.500 5z" fill="#57c0f5"/></> },
  { art: <>
    <circle cx="9" cy="9" r="7.800" fill="#e0443a"/>
    <path d="M9 9L5 16A7.800 7.800 0 0 1 2.200 5.200z" fill="#3aa757"/>
    <path d="M9 9h7.700a7.800 7.800 0 0 1-8.500 7.800z" fill="#fbc116"/>
    <path d="M5.500 10.500L9 16.800 5 15.900 2 12z" fill="#3aa757"/>
    <circle cx="9" cy="9" r="3.700" fill="#fff"/><circle cx="9" cy="9" r="2.900" fill="#4285f4"/></> },
  { art: <><path d="M3 1h12v16H3z" fill="#8b9aa3"/><path d="M4 2h10v3.500H4z" fill="#5ec6ea"/><path d="M4 7h2.500v2H4zM7.700 7h2.500v2H7.700zM4 10.300h2.500v2H4zM7.700 10.300h2.500v2H7.700zM4 13.600h2.500v2H4zM7.700 13.600h2.500v2H7.700z" fill="#e9eef1"/><path d="M11.500 7H14v8.600h-2.500z" fill="#2f6f9a"/></> },
  { art: <><path d="M6 1h6v12H6z" fill="#b0b4b6"/><path d="M4.500 7v6.500h9V7" fill="none" stroke="#6b6f71" strokeWidth="1.300"/><circle cx="9" cy="9" r="1.900" fill="#d13a2e"/><path d="M7 15h4v2H7z" fill="#909496"/></> },
  { open: true, art: <><path d="M1.500 2h15v14h-15z" fill="#2a7fd0"/><path d="M1.500 16v-4l6-6 9 10z" fill="#0a2c54"/><path d="M9 16l4-5 3.500 4v1z" fill="#9fd0f4"/><circle cx="13" cy="5.500" r="1.300" fill="#fff"/></> },
  { open: true, active: true, art: <><path d="M6 3.500l11-2.500-3 14-8 1.500z" fill="#7a97b0"/><path d="M9 5l5-1.500-2 10-3 .5z" fill="#3f5a74"/><path d="M2 4.500h8.500v10H2z" fill="#1478c8"/><path d="M8 7H4.800v5H8M4.800 9.500h2.800" fill="none" stroke="#fff" strokeWidth="1.300"/></> },
];

//-----------------------------------------------------------------------------//
// Component
//-----------------------------------------------------------------------------//

class App extends React.Component {

  renderHeader() {
    return (
      <>
        <TitleBar>
          <svg width="11" height="11" viewBox="0 0 11 11">
            <path d="M0 0h11v11H0z" fill="#1173c7"/>
            <path d="M8 2.300H3.500v6.400H8M3.500 5.500h4" fill="none" stroke="#fff" strokeWidth="1.500"/>
          </svg>
          <Title>ETABS Ultimate C 19.1.0 - AXES</Title>
          <WindowButtons>
            <svg width="10" height="10" viewBox="0 0 10 10"><path d="M1 4.500h7" stroke="#999" strokeWidth="1.200"/></svg>
            <svg width="10" height="10" viewBox="0 0 10 10"><path d="M1.500 3h4.500v4.500H1.500zM3 3V1.500h4.500V6H6" fill="none" stroke="#333" strokeWidth=".9"/></svg>
            <svg width="10" height="10" viewBox="0 0 10 10"><path d="M1.500 1.500l6 6M7.500 1.500l-6 6" stroke="#333" strokeWidth=".9"/></svg>
          </WindowButtons>
        </TitleBar>
        <MenuBar>
          {MENU.map(([label, w]) => <MenuItem key={label} $w={w}>{label}</MenuItem>)}
        </MenuBar>
        <ToolRow>
          <Toolbar>
            <Grip $size={7}/>
            {TOOLS_MAIN.map(renderTool)}
          </Toolbar>
          <Toolbar $gap={17}>
            <Grip $size={6}/>
            {TOOLS_SECTION.map(renderTool)}
          </Toolbar>
        </ToolRow>
      </>
    );
  }

  renderExplorer() {
    return (
      <Explorer>
        <DockHeader $pad={9}>
          <DockTab $w={91}>Model Explorer</DockTab>
          <DockButtons><Caret $big/><Cross size={8}/></DockButtons>
        </DockHeader>
        <PageTabs>
          <PageTab $w={28} $on>Model</PageTab>
          <PageTab $w={31}>Display</PageTab>
          <PageTab $w={28}>Tables</PageTab>
          <PageTab $w={32}>Reports</PageTab>
        </PageTabs>
        <TreeBox>
          <TreeRow $level={0}>
            <svg width="9" height="10.600" viewBox="0 0 9 10.600">
              <path d="M.500 2.500h5v5h-5z" fill="#fff" stroke="#999" strokeWidth=".8"/>
              <path d="M1.700 5h2.600M6.500 5h2.500" stroke="#444" strokeWidth=".8"/>
            </svg>
            Model
          </TreeRow>
          {TREE.map(label => (
            <TreeRow key={label} $level={1}>
              <svg width="9" height="10.600" viewBox="0 0 9 10.600">
                <path d="M3 0v10.600" stroke="#bbb" strokeWidth=".6"/>
                <path d="M.500 2.500h5v5h-5z" fill="#fff" stroke="#888" strokeWidth=".8"/>
                <path d="M1.500 5h3M3 3.500v3M6 5h2.500" stroke="#333" strokeWidth=".8"/>
              </svg>
              {label}
            </TreeRow>
          ))}
        </TreeBox>
      </Explorer>
    );
  }

  renderTaskbar() {
    return (
      <Taskbar>
        <StartButton>
          <svg width="12" height="12" viewBox="0 0 12 12">
            <path d="M0 1.700l5.300-.8v4.800H0zM6 .8l6-.8v5.700H6zM0 6.400h5.300v4.800L0 10.400zM6 6.400h6V12l-6-.8z" fill="#fff"/>
          </svg>
        </StartButton>
        <Search>
          <svg width="12" height="13" viewBox="0 0 12 13"><circle cx="7.300" cy="4.800" r="3.800" fill="none" stroke="#222"/><path d="M4.600 7.600L1 12" stroke="#222" strokeWidth="1.100"/></svg>
          Type here to search
        </Search>
        <Apps>
          {TASKS.map((t, i) => (
            <Task key={i} $open={t.open} $active={t.active}>
              <svg width="17" height="17" viewBox="0 0 18 18">{t.art}</svg>
            </Task>
          ))}
        </Apps>
        <Tray>
          <TrayCell $w={17}>
            <svg width="15" height="11" viewBox="0 0 15 11"><path d="M3.500 11a3.300 3.300 0 0 1 0-6C4.500 1 8 0 10.500 2.500 13 2.500 15 5 14 8c-.5 2-1.500 3-3 3z" fill="#b9def3"/><path d="M3.500 11a3.300 3.300 0 0 1 0-6c3-1 6 2 5 6z" fill="#e3f3fb"/></svg>
          </TrayCell>
          <TrayCell $w={28}>61°F</TrayCell>
          <TrayCell $w={34}>Cloudy</TrayCell>
          <TrayCell $w={24}><svg width="8" height="5" viewBox="0 0 8 5"><path d="M.5 4.500L4 1l3.500 3.500" fill="none" stroke="#eee"/></svg></TrayCell>
          <TrayCell $w={10}><svg width="7" height="12" viewBox="0 0 7 12"><rect x="1.500" width="4" height="7.500" rx="1" fill="#fff"/><path d="M.5 5v3.500h6V5M3.500 8.500V12" fill="none" stroke="#eee"/></svg></TrayCell>
          <TrayCell $w={22}><svg width="12" height="12" viewBox="0 0 12 12"><path d="M1 2.500l8-1.500v2M1 2.500V11h7M3 4.500h5M3 7h3M9.500 1.500h1.500V7" fill="none" stroke="#ddd"/><circle cx="8.500" cy="9" r="2.600" fill="#f09a2a"/></svg></TrayCell>
          <TrayCell $w={12}><svg width="12" height="12" viewBox="0 0 12 12"><circle cx="5.500" cy="5.500" r="4.700" fill="none" stroke="#ddd"/><path d="M1 5.500h9M5.500 1c-3 3-3 6 0 9M5.500 1c3 3 3 6 0 9M2 3h7M2 8h5" fill="none" stroke="#ddd" strokeWidth=".8"/><circle cx="9" cy="9" r="2.400" fill="#222" stroke="#ddd" strokeWidth=".8"/></svg></TrayCell>
          <TrayCell $w={17}><svg width="12" height="10" viewBox="0 0 12 10"><path d="M.5 3.500h2L5 1v8L2.500 6.500h-2z" fill="none" stroke="#ddd"/><path d="M6.800 3.500q1.200 1.500 0 3M8.500 2.300q2 2.700 0 5.400" fill="none" stroke="#ccc" strokeWidth=".9"/><path d="M10.200 1q2.500 4 0 8" fill="none" stroke="#777" strokeWidth=".9"/></svg></TrayCell>
          <TrayCell $w={24} $small>ENG</TrayCell>
          <TrayCell $w={44} $small>7:18 AM<br/>11/17/2021</TrayCell>
          <TrayCell $w={26}><svg width="16" height="17" viewBox="0 0 16 17"><path d="M.5 1h11v8H5L3 11.500V9H.500z" fill="#f2f2f2"/><path d="M2.500 3.500h7M2.500 6h7" stroke="#333" strokeWidth=".9"/><circle cx="9.800" cy="11.300" r="4.800" fill="#444" stroke="#888" strokeWidth=".8"/><text x="9.800" y="14" textAnchor="middle" fontSize="7.500" fill="#fff">2</text></svg></TrayCell>
        </Tray>
      </Taskbar>
    );
  }

  render() {
    return (
      <Window>
        <GlobalStyle/>
        {this.renderHeader()}
        <Workspace>
          <SideStrip>
            <SideGroup><Grip $vertical $size={7}/>{SIDE_DRAW.map(renderSideTool)}</SideGroup>
            <SideGroup $gap={41}><Grip $vertical $size={6}/>{SIDE_SELECT.map(renderSideTool)}</SideGroup>
            <SideGroup><Grip $vertical $size={6}/>{SIDE_SNAP.map(renderSideTool)}</SideGroup>
          </SideStrip>
          {this.renderExplorer()}
          <ViewPane>
            <DockHeader $pad={9}>
              <DockTab $w={69} $blue>3-D View</DockTab>
              <DockButtons><Caret $big/><Cross size={8}/></DockButtons>
            </DockHeader>
            <Model/>
          </ViewPane>
        </Workspace>
        <StatusBar>
          <StatusText>3-D View</StatusText>
          <Combo $w={59}>One Story<Chevron/></Combo>
          <Combo $w={58}>Global<Chevron/></Combo>
          <UnitsButton>Units...</UnitsButton>
        </StatusBar>
        {this.renderTaskbar()}
      </Window>
    );
  }
}

//-----------------------------------------------------------------------------//
// Export
//-----------------------------------------------------------------------------//

export default App;

//-----------------------------------------------------------------------------//
